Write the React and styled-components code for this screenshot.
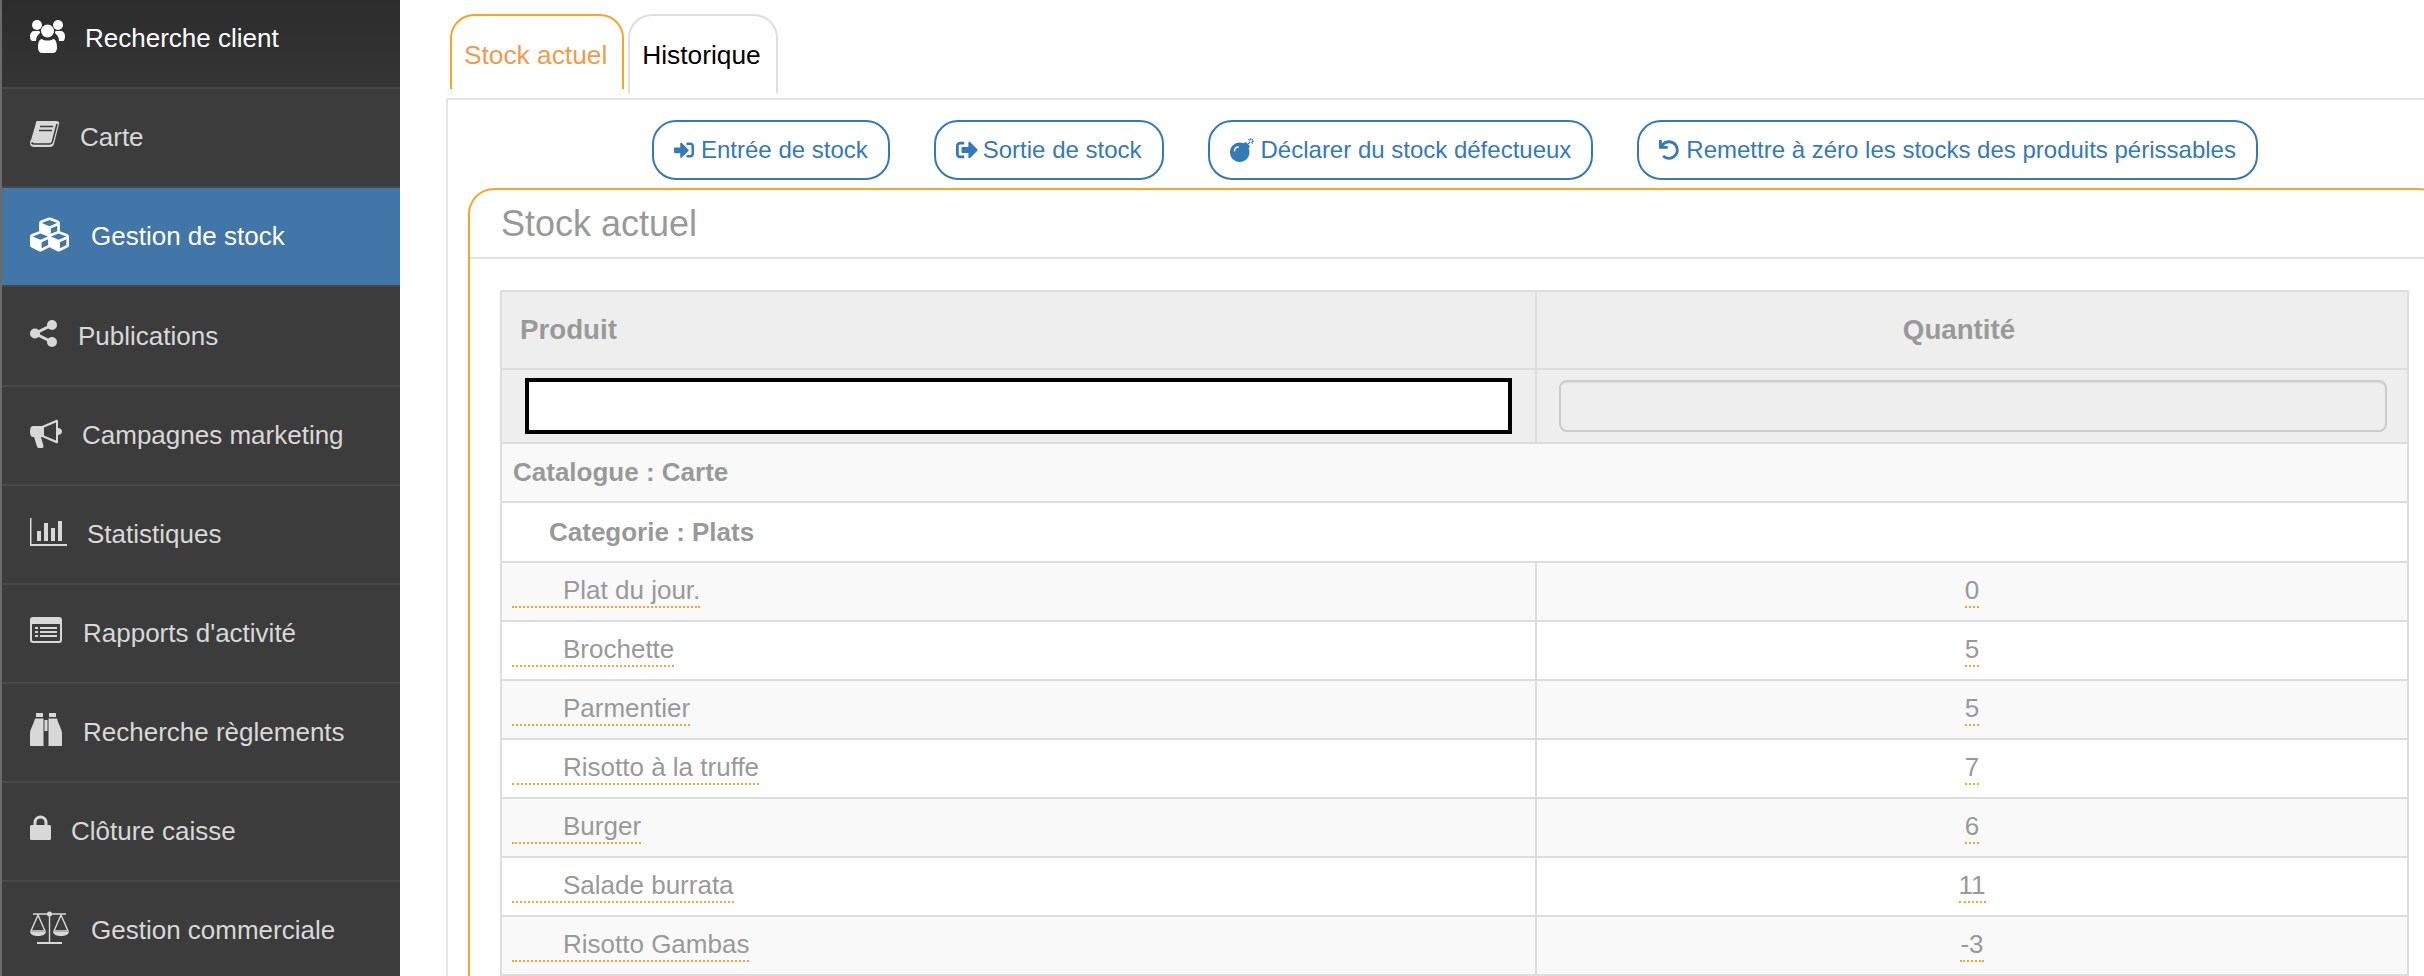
import React from "react";
import styled, { createGlobalStyle } from "styled-components";
import { FaCubes, FaSignInAlt, FaSignOutAlt, FaBomb, FaUndo } from "react-icons/fa";

const Global = createGlobalStyle`
  html, body { margin: 0; padding: 0; background: #fff; }
  body { font-family: "Liberation Sans", Arial, sans-serif; }
`;

const Page = styled.div`
  display: flex;
  height: 976px;
  overflow: hidden;
`;

const Sidebar = styled.nav`
  flex: 0 0 400px;
  box-sizing: border-box;
  border-left: 2px solid #6b6b6b;
  background: #3c3c3c;
  height: 976px;
`;

const NavItem = styled.div`
  box-sizing: border-box;
  height: ${(p) => p.$h || 99}px;
  display: flex;
  align-items: center;
  gap: 20px;
  padding: 0 0 ${(p) => (p.$first ? 10 : 0)}px 28px;
  border-bottom: 2px solid #484848;
  font-size: 26px;
  color: ${(p) => (p.$light ? "#ffffff" : "#d8d8d8")};
  background: ${(p) =>
    p.$active ? "#4276a9" : p.$first ? "linear-gradient(#2c2c2c, #353535)" : "transparent"};
`;

const IconBox = styled.span`
  flex: none;
  display: flex;
  width: ${(p) => p.$w}px;
  margin-top: -${(p) => p.$up || 5}px;
  & > svg { display: block; }
`;

const Main = styled.main`
  flex: 1;
  min-width: 0;
  overflow: hidden;
  padding-top: 14px;
`;

const Tabs = styled.div`
  display: flex;
  align-items: flex-start;
  gap: 4px;
  padding-left: 50px;
  height: 84px;
`;

const Tab = styled.div`
  box-sizing: border-box;
  height: ${(p) => (p.$active ? 75 : 79)}px;
  padding: 19px 15px 0 12px;
  line-height: 40px;
  font-size: 26.3px;
  color: ${(p) => (p.$active ? "#f29a4b" : "#000")};
  border: 2px solid ${(p) => (p.$active ? "#f9a32a" : "#dedede")};
  border-bottom: 0;
  border-radius: 24px 24px 0 0;
`;

const Panel = styled.section`
  margin-left: 46px;
  border: 2px solid #e4e4e4;
  border-right: 0;
  padding: 20px 0 0 20px;
  height: 900px;
`;

const Actions = styled.div`
  display: flex;
  gap: 44px;
  padding-left: 184px;
`;

const ActionButton = styled.div`
  box-sizing: border-box;
  height: 60px;
  display: flex;
  align-items: center;
  gap: ${(p) => p.$gap || 7}px;
  padding: 0 20px;
  border: 2px solid #337ab7;
  border-radius: 24px;
  font-size: 24px;
  color: #337ab7;
  white-space: nowrap;
  & > svg { flex: none; }
`;

const StockCard = styled.div`
  margin: 8px -21px 0 0;
  border: 2px solid #f9a32a;
  border-bottom: 0;
  border-radius: 26px 26px 0 0;
`;

const CardTitle = styled.h2`
  margin: 0;
  height: 69px;
  box-sizing: border-box;
  padding-left: 31px;
  border-bottom: 2px solid #e4e4e4;
  font-size: 36px;
  font-weight: 400;
  line-height: 68px;
  color: #999;
`;

const CardBody = styled.div`
  padding: 31px 34px 0 30px;
`;

const Table = styled.table`
  width: 100%;
  table-layout: fixed;
  border-collapse: collapse;
  font-size: 26px;
  color: #999;
  td, th { border: 2px solid #ddd; padding: 0; }
`;

const HeadRow = styled.tr`
  height: 78px;
  background: #eee;
`;

const HeadCell = styled.th`
  font-size: 27.7px;
  font-weight: 700;
  text-align: ${(p) => p.$align || "left"};
  padding: ${(p) => (p.$align ? "0 26px 0 0" : "0 0 0 18px")} !important;
`;

const FilterRow = styled.tr`
  height: 74px;
  background: #eee;
`;

const FilterCell = styled.td`
  padding: 0 ${(p) => p.$right}px 0 ${(p) => p.$left}px !important;
`;

const SearchInput = styled.div`
  box-sizing: border-box;
  height: 56px;
  border: 4px solid #000;
  background: #fff;
`;

const QtyInput = styled.div`
  box-sizing: border-box;
  height: 52px;
  border: 2px solid #ccc;
  border-radius: 8px;
  background: #eee;
  box-shadow: inset 0 1px 1px rgba(0, 0, 0, 0.075);
`;

const Row = styled.tr`
  height: ${(p) => p.$h || 59}px;
  background: ${(p) => (p.$odd ? "#f9f9f9" : "#fff")};
`;

const GroupCell = styled.td`
  font-weight: 700;
  padding-left: ${(p) => p.$indent}px !important;
`;

const NameCell = styled.td`
  padding-left: 10px !important;
`;

const QtyCell = styled.td`
  text-align: center;
`;

const Editable = styled.span`
  display: inline-block;
  line-height: 31px;
  padding-left: ${(p) => p.$indent || 0}px;
  border-bottom: 2px dotted #f9a32a;
`;

const UsersIcon = () => (
  <svg width="35" height="33" viewBox="0 0 35 33">
    <g fill="currentColor">
      <circle cx="7" cy="5" r="5" />
      <circle cx="28" cy="5" r="5" />
      <path d="M0 16c0-3 2-5 4-5h5c1 0 1 1 1 2-2 2-4 4-4 8H3c-2 0-3-2-3-5zM35 16c0-3-2-5-4-5h-5c-1 0-1 1-1 2 2 2 4 4 4 8h4c1 0 2-2 2-5z" />
      <circle cx="17.500" cy="11" r="6.500" />
      <path d="M8 28c0-5 1-9 4-9 2 2 9 2 11 0 3 0 4 4 4 9 0 3-2 5-4 5H12c-2 0-4-2-4-5z" />
    </g>
  </svg>
);

const BookIcon = () => (
  <svg width="30" height="28" viewBox="0 0 30 28">
    <path fill="currentColor" d="M7 0h19c2 0 4 1 3 3l-5 20c-.5 2-2 3-4 3H4c-2 0-4-1-4-4 0-1 0-2 1-3L6 2c0-1 0-2 1-2z" />
    <path fill="none" stroke="#3c3c3c" strokeWidth="1.600" d="M10 5.500h13M9 9.500h13M1.500 21.500c1 1.500 2 1.500 3 1.500h15c1.500 0 2.500-1 3-2.500L27 3" />
  </svg>
);

const ShareIcon = () => (
  <svg width="27" height="27" viewBox="0 0 27 27">
    <circle cx="5" cy="13.500" r="5" fill="currentColor" />
    <circle cx="22" cy="5" r="5" fill="currentColor" />
    <circle cx="22" cy="22" r="5" fill="currentColor" />
    <path stroke="currentColor" strokeWidth="3" fill="none" d="M22 5 5 13.500 22 22" />
  </svg>
);

const BullhornIcon = () => (
  <svg width="32" height="29" viewBox="0 0 32 29">
    <g fill="currentColor">
      <path d="M3 7h9v11H3c-2 0-3-2-3-5.500S1 7 3 7z" />
      <path d="M4 18h7l2.500 9c.2 1-.5 2-1.500 2H9c-1 0-1.500-.5-2-1.500z" />
      <path fillRule="evenodd" d="M12 7 26 1c.8-.5 2-.5 2 1v21c0 1.500-1.200 1.500-2 1l-14-6zM14 8.500v8l12 5V3.500z" />
      <path d="M28 9c2 0 4 1.500 4 3.500S30 16 28 16z" />
    </g>
  </svg>
);

const ChartIcon = () => (
  <svg width="37" height="28" viewBox="0 0 37 28">
    <g fill="currentColor">
      <path d="M0 0h1.500v26H37v2H0z" />
      <rect x="7" y="13" width="4" height="10" />
      <rect x="14" y="5" width="4" height="18" />
      <rect x="21" y="10" width="4" height="13" />
      <rect x="28" y="3" width="4" height="20" />
    </g>
  </svg>
);

const ListIcon = () => (
  <svg width="32" height="26" viewBox="0 0 32 26">
    <path fill="currentColor" fillRule="evenodd" d="M3 0h26c2 0 3 1 3 3v20c0 2-1 3-3 3H3c-2 0-3-1-3-3V3c0-2 1-3 3-3zM3 7c-1 0-1 0-1 1v14c0 1 0 2 1 2h26c1 0 1-1 1-2V8c0-1 0-1-1-1z" />
    <g fill="currentColor">
      <rect x="5" y="10" width="3" height="2" />
      <rect x="5" y="14" width="3" height="2" />
      <rect x="5" y="18" width="3" height="2" />
      <rect x="10" y="10" width="17" height="2" />
      <rect x="10" y="14" width="17" height="2" />
      <rect x="10" y="18" width="17" height="2" />
    </g>
  </svg>
);

const BinocularsIcon = () => (
  <svg width="32" height="33" viewBox="0 0 32 33">
    <g fill="currentColor">
      <path d="M6 0h7v4H6zM19 0h7v4h-7z" />
      <path d="M5 5.500h8.500V33H1c-.6 0-1-.4-1-1V20c0-3 4-10 5-14.500z" />
      <path d="M27 5.500h-8.500V33H31c.6 0 1-.4 1-1V20c0-3-4-10-5-14.500z" />
      <path d="M14.500 7h3v11h-3z" />
    </g>
  </svg>
);

const LockIcon = () => (
  <svg width="21" height="25" viewBox="0 0 21 25">
    <rect x="0" y="10" width="21" height="15" rx="1.500" fill="currentColor" />
    <path d="M5 11V7.500a5.500 5.500 0 0 1 11 0V11" fill="none" stroke="currentColor" strokeWidth="3" />
  </svg>
);

const ScaleIcon = () => (
  <svg width="39" height="33" viewBox="0 0 39 33">
    <g stroke="currentColor" strokeWidth="1.400" fill="none">
      <path d="M3 3h33M19.500 3v28M8 4 1 20h14zM31 4l-7 16h14z" />
    </g>
    <g fill="currentColor">
      <circle cx="19.500" cy="3" r="2.500" />
      <rect x="7" y="31" width="25" height="2" />
      <path d="M0 21h16c-1 3-4 4-8 4s-7-1-8-4zM23 21h16c-1 3-4 4-8 4s-7-1-8-4z" />
    </g>
  </svg>
);

const nav = [
  { label: "Recherche client", icon: <UsersIcon />, w: 35, h: 89, light: true, first: true },
  { label: "Carte", icon: <BookIcon />, w: 30 },
  { label: "Gestion de stock", icon: <FaCubes size={39} />, w: 41, light: true, active: true },
  { label: "Publications", icon: <ShareIcon />, w: 28, h: 100 },
  { label: "Campagnes marketing", icon: <BullhornIcon />, w: 32 },
  { label: "Statistiques", icon: <ChartIcon />, w: 37 },
  { label: "Rapports d'activité", icon: <ListIcon />, w: 33, up: 8 },
  { label: "Recherche règlements", icon: <BinocularsIcon />, w: 33, up: 7 },
  { label: "Clôture caisse", icon: <LockIcon />, w: 21, up: 8 },
  { label: "Gestion commerciale", icon: <ScaleIcon />, w: 41, up: 7 },
];

const actions = [
  { label: "Entrée de stock", icon: <FaSignInAlt size={20} /> },
  { label: "Sortie de stock", icon: <FaSignOutAlt size={22} />, gap: 5 },
  { label: "Déclarer du stock défectueux", icon: <FaBomb size={24} /> },
  { label: "Remettre à zéro les stocks des produits périssables", icon: <FaUndo size={20} /> },
];

const products = [
  ["Plat du jour.", 0],
  ["Brochette", 5],
  ["Parmentier", 5],
  ["Risotto à la truffe", 7],
  ["Burger", 6],
  ["Salade burrata", 11],
  ["Risotto Gambas", -3],
];

export default function App() {
  return (
    <Page>
      <Global />
      <Sidebar>
        {nav.map((n) => (
          <NavItem key={n.label} $h={n.h} $first={n.first} $active={n.active} $light={n.light}>
            <IconBox $w={n.w} $up={n.up}>{n.icon}</IconBox>
            <span>{n.label}</span>
          </NavItem>
        ))}
      </Sidebar>
      <Main>
        <Tabs>
          <Tab $active>Stock actuel</Tab>
          <Tab>Historique</Tab>
        </Tabs>
        <Panel>
          <Actions>
            {actions.map((a) => (
              <ActionButton key={a.label} $gap={a.gap}>
                {a.icon}
                <span>{a.label}</span>
              </ActionButton>
            ))}
          </Actions>
          <StockCard>
            <CardTitle>Stock actuel</CardTitle>
            <CardBody>
              <Table>
                <colgroup>
                  <col style={{ width: "1035px" }} />
                  <col />
                </colgroup>
                <thead>
                  <HeadRow>
                    <HeadCell>Produit</HeadCell>
                    <HeadCell $align="center">Quantité</HeadCell>
                  </HeadRow>
                  <FilterRow>
                    <FilterCell $left={23} $right={23}><SearchInput /></FilterCell>
                    <FilterCell $left={22} $right={20}><QtyInput /></FilterCell>
                  </FilterRow>
                </thead>
                <tbody>
                  <Row $odd><GroupCell colSpan={2} $indent={11}>Catalogue : Carte</GroupCell></Row>
                  <Row $h={60}><GroupCell colSpan={2} $indent={47}>Categorie : Plats</GroupCell></Row>
                  {products.map(([name, qty], i) => (
                    <Row key={name} $odd={i % 2 === 0}>
                      <NameCell><Editable $indent={51}>{name}</Editable></NameCell>
                      <QtyCell><Editable>{qty}</Editable></QtyCell>
                    </Row>
                  ))}
                </tbody>
              </Table>
            </CardBody>
          </StockCard>
        </Panel>
      </Main>
    </Page>
  );
}
